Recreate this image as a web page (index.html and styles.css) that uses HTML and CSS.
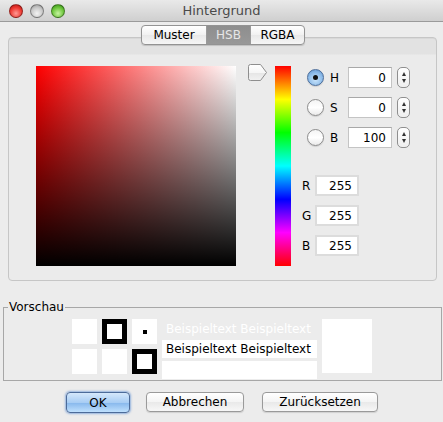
FILE: index.html
```html
<!DOCTYPE html>
<html lang="de">
<head>
<meta charset="utf-8">
<title>Hintergrund</title>
<link rel="stylesheet" href="styles.css">
</head>
<body>
<div class="window">
  <div class="titlebar">
    <div class="lights">
      <span class="light red"></span>
      <span class="light gray"></span>
      <span class="light green"></span>
    </div>
    <div class="title">Hintergrund</div>
  </div>

  <div class="tabs">
    <span class="tab">Muster</span>
    <span class="tab active">HSB</span>
    <span class="tab">RGBA</span>
  </div>

  <div class="group">
    <div class="picker">
      <div class="sv"><div class="sv-black"></div></div>
      <div class="slider">
        <svg class="thumb" width="20" height="18" viewBox="0 0 20 18">
          <defs>
            <linearGradient id="tg" x1="0" y1="0" x2="0" y2="1">
              <stop offset="0" stop-color="#ffffff"/>
              <stop offset="0.5" stop-color="#f6f6f6"/>
              <stop offset="0.55" stop-color="#e6e6e6"/>
              <stop offset="1" stop-color="#f2f2f2"/>
            </linearGradient>
          </defs>
          <path d="M2.5 0.5 H12.5 L18.5 8.5 L12.5 16.5 H2.5 Q0.5 16.5 0.5 14.5 V2.5 Q0.5 0.5 2.5 0.5 Z" fill="url(#tg)" stroke="#8e8e8e" stroke-width="1"/>
        </svg>
        <div class="hue"></div>
      </div>
      <div class="controls">
        <div class="hsb-row">
          <span class="radio checked"><span class="dot"></span></span>
          <span class="lbl">H</span>
          <span class="field">0</span>
          <span class="spin"><span class="up"></span><span class="down"></span></span>
        </div>
        <div class="hsb-row">
          <span class="radio"></span>
          <span class="lbl">S</span>
          <span class="field">0</span>
          <span class="spin"><span class="up"></span><span class="down"></span></span>
        </div>
        <div class="hsb-row">
          <span class="radio"></span>
          <span class="lbl">B</span>
          <span class="field">100</span>
          <span class="spin"><span class="up"></span><span class="down"></span></span>
        </div>
        <div class="rgb">
          <div class="rgb-row"><span class="rlbl">R</span><span class="field">255</span></div>
          <div class="rgb-row"><span class="rlbl">G</span><span class="field">255</span></div>
          <div class="rgb-row"><span class="rlbl">B</span><span class="field">255</span></div>
        </div>
      </div>
    </div>
  </div>

  <fieldset class="preview">
    <legend>Vorschau</legend>
    <div class="pv">
      <div class="cells">
        <span class="cell"></span>
        <span class="cell framed"></span>
        <span class="cell"><span class="pt"></span></span>
        <span class="cell"></span>
        <span class="cell"></span>
        <span class="cell framed"></span>
      </div>
      <div class="texts">
        <div class="t1">Beispieltext Beispieltext</div>
        <div class="t2">Beispieltext Beispieltext</div>
        <div class="t3"></div>
      </div>
      <div class="big"></div>
    </div>
  </fieldset>

  <div class="buttons">
    <span class="btn ok">OK</span>
    <span class="btn">Abbrechen</span>
    <span class="btn">Zurücksetzen</span>
  </div>
</div>
</body>
</html>
```

FILE: styles.css
```css
* { box-sizing: border-box; }
html, body { margin: 0; padding: 0; }
body {
  width: 443px;
  height: 422px;
  overflow: hidden;
  background: #ececec;
  font-family: "DejaVu Sans", "Liberation Sans", sans-serif;
  font-size: 12px;
  color: #000;
}
.window { width: 443px; height: 422px; display: flex; flex-direction: column; }

.titlebar {
  height: 22px;
  flex: none;
  background: linear-gradient(#e9e9e9, #cfcfcf);
  border-bottom: 1px solid #9a9a9a;
  display: flex;
  align-items: center;
  position: relative;
}
.lights { display: flex; gap: 7px; padding-left: 9px; }
.light {
  width: 14px; height: 14px; border-radius: 50%;
  border: 1px solid rgba(0,0,0,0.35);
}
.light.red { background: radial-gradient(circle at 50% 70%, #ff9a94 0%, #ee3a33 55%, #b2120d 100%); }
.light.gray { background: radial-gradient(circle at 50% 70%, #f3f3f3 0%, #c9c9c9 55%, #8f8f8f 100%); }
.light.green { background: radial-gradient(circle at 50% 70%, #c7f3a2 0%, #6ec73d 55%, #2f8a12 100%); }
.title {
  position: absolute; left: 0; right: 0; top: 0; height: 21px;
  line-height: 21px; text-align: center;
  font-size: 13px; color: #4a4a4a;
}

.tabs {
  display: flex;
  margin: 3px 0 0 141px;
  width: 164px;
  height: 20px;
  border: 1px solid #939393;
  border-radius: 4px;
  overflow: hidden;
  position: relative;
  z-index: 2;
  background: linear-gradient(#ffffff, #f1f1f1 50%, #e8e8e8 51%, #f6f6f6);
  box-shadow: 0 1px 1px rgba(0,0,0,0.15);
}
.tab {
  display: flex; align-items: center; justify-content: center;
  height: 18px; font-size: 12px;
}
.tab:nth-child(1) { width: 65px; border-right: 1px solid #9a9a9a; }
.tab:nth-child(2) { width: 44px; border-right: 1px solid #9a9a9a; }
.tab:nth-child(3) { flex: 1; }
.tab.active {
  background: linear-gradient(#8e8e8e, #989898);
  color: #e6e6e6;
}

.group {
  margin: -8px 0 0 8px;
  width: 429px;
  height: 244px;
  border: 1px solid #c6c6c6;
  border-radius: 4px;
  background: linear-gradient(#e2e2e2 0, #e2e2e2 16px, #ebebeb 17px, #ebebeb);
  box-shadow: 0 1px 0 #d8d8d8 inset;
  flex: none;
}
.picker { display: flex; padding: 28px 0 0 27px; }
.sv {
  width: 200px; height: 200px; flex: none; position: relative;
  background: linear-gradient(to right, #ff0000, #ffffff);
}
.sv-black {
  position: absolute; inset: 0;
  background: linear-gradient(to bottom, rgba(0,0,0,0), #000000);
}
.slider { width: 43px; margin-left: 12px; position: relative; display: flex; justify-content: flex-end; }
.thumb { position: absolute; left: 0; top: -2px; }
.hue {
  width: 16px; height: 200px;
  background: linear-gradient(to bottom, #ff0000 0%, #ffff00 16.7%, #00ff00 33.3%, #00ffff 50%, #0000ff 66.7%, #ff00ff 83.3%, #ff0000 100%);
}
.controls { margin-left: 11px; display: flex; flex-direction: column; }
.hsb-row { display: flex; align-items: center; height: 21px; margin-top: 9px; padding-left: 5px; }
.hsb-row:first-child { margin-top: 1px; }
.radio {
  width: 17px; height: 17px; border-radius: 50%; flex: none;
  border: 1px solid #8c8c8c;
  background: linear-gradient(#f4f4f4, #ffffff 50%, #eaeaea);
  display: flex; align-items: center; justify-content: center;
  box-shadow: 0 1px 1px rgba(0,0,0,0.12);
}
.radio.checked {
  border-color: #4b6d9a;
  background: radial-gradient(circle at 50% 65%, #c9e4fb 0%, #8fbdea 55%, #5b8fcc 100%);
}
.dot { width: 5px; height: 5px; border-radius: 50%; background: #111; }
.lbl { width: 24px; padding-left: 6px; font-size: 12px; }
.field {
  width: 44px; height: 21px; flex: none;
  background: #fff;
  border: 1px solid #c4c4c4;
  border-top-color: #a8a8a8;
  display: flex; align-items: center; justify-content: flex-end;
  padding-right: 5px; font-size: 12px;
}
.spin {
  width: 13px; height: 21px; margin-left: 5px; flex: none;
  border: 1px solid #8f8f8f; border-radius: 5px;
  background: linear-gradient(#ffffff, #eeeeee);
  display: flex; flex-direction: column; align-items: center; justify-content: center; gap: 3px;
}
.up { width: 0; height: 0; border-left: 2.5px solid transparent; border-right: 2.5px solid transparent; border-bottom: 4px solid #333; }
.down { width: 0; height: 0; border-left: 2.5px solid transparent; border-right: 2.5px solid transparent; border-top: 4px solid #333; }
.rgb { margin-top: 27px; display: flex; flex-direction: column; gap: 9px; }
.rgb-row { display: flex; align-items: center; height: 21px; }
.rgb-row .field { border: 2px solid #dcdcdc; }
.rlbl { width: 13px; font-size: 12px; }

.preview {
  margin: 20px 0 0 3px;
  width: 439px;
  height: 80px;
  padding: 0;
  border: 1px solid #a7a7a7;
  flex: none;
}
.preview legend { padding: 0 1px; margin-left: 4px; font-size: 12px; line-height: 12px; }
.pv { display: flex; padding: 6px 0 0 68px; }
.cells { display: grid; grid-template-columns: repeat(3, 25px); grid-auto-rows: 25px; gap: 5px; }
.cell { background: #fff; display: flex; align-items: center; justify-content: center; }
.cell.framed { border: 5px solid #000; }
.pt { width: 4px; height: 4px; background: #000; }
.texts { margin-left: 5px; width: 155px; display: flex; flex-direction: column; }
.t1 { height: 21px; color: #fff; padding-left: 4px; line-height: 21px; }
.t2 { height: 18px; background: #fff; padding-left: 4px; line-height: 18px; }
.t3 { height: 18px; background: #fff; margin-top: 3px; }
.big { width: 50px; height: 54px; background: #fff; margin-left: 5px; }

.buttons { display: flex; margin: 11px 0 0 66px; }
.btn {
  height: 20px; display: flex; align-items: center; justify-content: center;
  border: 1px solid #9a9a9a; border-radius: 4px;
  background: linear-gradient(#ffffff, #f4f4f4 50%, #e9e9e9 51%, #f7f7f7);
  font-size: 12px;
  box-shadow: 0 1px 1px rgba(0,0,0,0.12);
}
.btn.ok {
  width: 64px; height: 21px;
  border-color: #4c6b99;
  background: linear-gradient(#d5e8fb, #a8cdf4 50%, #86b7ec 51%, #bfe0fd);
  box-shadow: 0 0 2px 1px rgba(90,140,210,0.6);
}
.btn:nth-child(2) { width: 98px; margin-left: 16px; }
.btn:nth-child(3) { width: 116px; margin-left: 18px; }
```
